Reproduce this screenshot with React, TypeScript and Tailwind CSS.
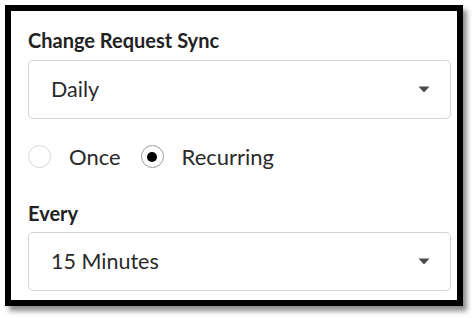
import { useState } from "react";

const font = { fontFamily: "Lato, 'Liberation Sans', sans-serif" };

function Caret() {
    return (
        <svg width="12" height="7" viewBox="0 0 12 7" className="shrink-0">
            <path d="M0.5 0.5 L11.5 0.5 L6 6.5 Z" fill="#4a4a4a" />
        </svg>
    );
}

function Select({ value }: { value: string }) {
    return (
        <div className="w-[423px] h-[59px] border border-[#d4d4d4] rounded-[5px] bg-white flex items-center justify-between pl-[22px] pr-[20px]">
            <span className="text-[21.5px] text-[#2a2a2a]">{value}</span>
            <Caret />
        </div>
    );
}

function Radio({ label, checked, onClick }: { label: string; checked: boolean; onClick: () => void }) {
    return (
        <button onClick={onClick} className="flex items-center gap-[18px]">
            <span
                className={
                    "w-[23px] h-[23px] rounded-full border flex items-center justify-center bg-white " +
                    (checked ? "border-[#9a9a9a]" : "border-[#d6d6d6]")
                }
            >
                {checked && <span className="w-[10px] h-[10px] rounded-full bg-black" />}
            </span>
            <span className="text-[22px] text-[#2a2a2a]">{label}</span>
        </button>
    );
}

export default function App() {
    const [mode, setMode] = useState("recurring");

    return (
        <div className="w-[476px] h-[318px] bg-white pt-[5px] pl-[5px]" style={font}>
            <div className="w-[458px] h-[301px] border-[6px] border-black bg-white shadow-[4px_5px_5px_rgba(0,0,0,0.45)] pl-[17px] pt-[19px]">
                <div className="text-[20px] font-bold text-[#222] leading-none h-[30px]">Change Request Sync</div>
                <Select value="Daily" />
                <div className="flex items-center gap-[20px] mt-[21px]">
                    <Radio label="Once" checked={mode === "once"} onClick={() => setMode("once")} />
                    <Radio label="Recurring" checked={mode === "recurring"} onClick={() => setMode("recurring")} />
                </div>
                <div className="text-[20px] font-bold text-[#222] leading-none mt-[30px] h-[29px]">Every</div>
                <Select value="15 Minutes" />
            </div>
        </div>
    );
}
